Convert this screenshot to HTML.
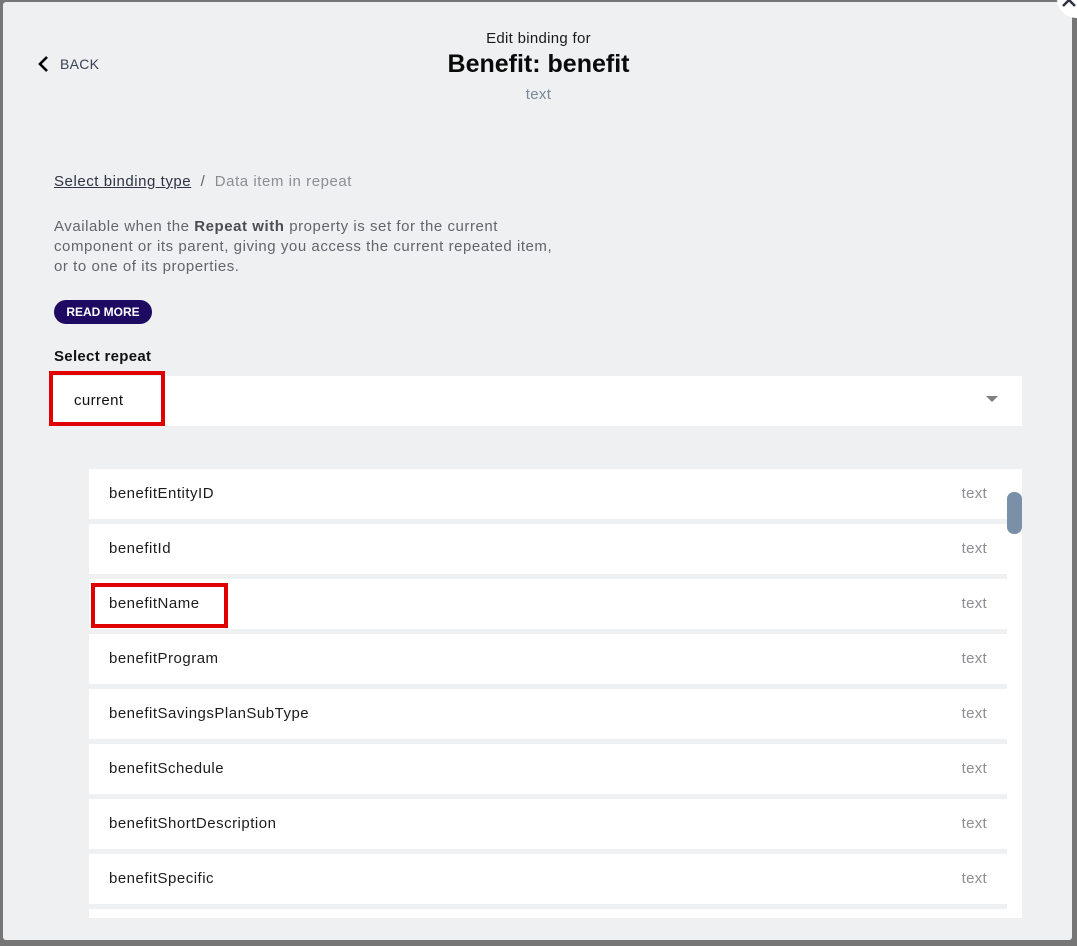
<!DOCTYPE html>
<html><head><meta charset="utf-8"><style>
*{box-sizing:border-box;margin:0;padding:0}
body{width:1077px;height:946px;background:#767676;position:relative;overflow:hidden;font-family:"Liberation Sans",sans-serif}
.modal{position:absolute;left:3px;top:2px;width:1069px;height:938px;background:#eff0f2;border-radius:3px}
.abs{position:absolute}
.back{left:34px;top:53px;font-size:14px;color:#3a4254;display:flex;align-items:center;letter-spacing:0.3px}
.list{position:absolute;left:86px;top:467px;width:933px;height:449px;background:#fff;overflow:hidden}
.row{position:absolute;left:0;width:918px;height:50px;background:#fff;border-bottom:5px solid #eff0f2;box-sizing:content-box}
.row .n{position:absolute;left:20px;top:16px;font-size:15px;color:#1c1c1c;letter-spacing:0.5px}
.row .t{position:absolute;right:20px;top:16px;font-size:15px;color:#8e8e92;letter-spacing:0.3px}
.red{position:absolute;border:4px solid #e00000}
</style></head><body>
<div class="modal">
 <div class="abs back"><svg width="14" height="18" viewBox="0 0 14 18"><path d="M10 2 L3 9 L10 16" fill="none" stroke="#000" stroke-width="2.6"/></svg><span style="margin-left:9px">BACK</span></div>
 <div class="abs" style="left:0;width:1071px;top:28px;text-align:center;font-size:15px;color:#1a1a1a;letter-spacing:0.3px">Edit binding for</div>
 <div class="abs" style="left:0;width:1071px;top:48px;text-align:center;font-size:25px;font-weight:bold;color:#0a0a0a">Benefit: benefit</div>
 <div class="abs" style="left:0;width:1071px;top:84px;text-align:center;font-size:15px;color:#7a8899;letter-spacing:0.3px">text</div>
 <div class="abs" style="left:51px;top:171px;font-size:15px;color:#5e6066;letter-spacing:0.55px"><span style="text-decoration:underline;color:#2e3445">Select binding type</span>&nbsp;&nbsp;/&nbsp;&nbsp;<span style="color:#8b8d92">Data item in repeat</span></div>
 <div class="abs" style="left:51px;top:215px;width:515px;font-size:15px;line-height:20px;color:#63656b;letter-spacing:0.55px">Available when the <b style="color:#4b4d52">Repeat with</b> property is set for the current component or its parent, giving you access the current repeated item, or to one of its properties.</div>
 <div class="abs" style="left:51px;top:298px;width:98px;height:24px;border-radius:12px;background:#1e0a63;color:#fff;font-size:12px;font-weight:bold;text-align:center;line-height:24px">READ MORE</div>
 <div class="abs" style="left:51px;top:346px;font-size:15px;font-weight:bold;color:#111;letter-spacing:0.3px">Select repeat</div>
 <div class="abs" style="left:47px;top:374px;width:972px;height:50px;background:#fff"></div>
 <div class="abs" style="left:71px;top:390px;font-size:15px;color:#111;letter-spacing:0.4px">current</div>
 <svg class="abs" style="left:983px;top:394px" width="12" height="7"><path d="M0 0 L12 0 L6 6 Z" fill="#7d7f85"/></svg>
 <div class="red" style="left:46px;top:369px;width:116px;height:55px"></div>
 <div class="list">
  <div class="row" style="top:0"><span class="n">benefitEntityID</span><span class="t">text</span></div>
  <div class="row" style="top:55px"><span class="n">benefitId</span><span class="t">text</span></div>
  <div class="row" style="top:110px"><span class="n">benefitName</span><span class="t">text</span></div>
  <div class="row" style="top:165px"><span class="n">benefitProgram</span><span class="t">text</span></div>
  <div class="row" style="top:220px"><span class="n">benefitSavingsPlanSubType</span><span class="t">text</span></div>
  <div class="row" style="top:275px"><span class="n">benefitSchedule</span><span class="t">text</span></div>
  <div class="row" style="top:330px"><span class="n">benefitShortDescription</span><span class="t">text</span></div>
  <div class="row" style="top:385px"><span class="n">benefitSpecific</span><span class="t">text</span></div>
  <div class="row" style="top:440px"></div>
  <div class="abs" style="left:918px;top:23px;width:15px;height:42px;border-radius:7px;background:#7a8fa8"></div>
 </div>
 <div class="red" style="left:88px;top:581px;width:137px;height:45px"></div>
</div>
<div class="abs" style="left:1057px;top:-20px;width:38px;height:38px;border-radius:50%;background:#fff"></div>
<svg class="abs" style="left:1060px;top:-10px" width="17" height="20"><path d="M3 16 L15 4 M3 4 L15 16" fill="none" stroke="#2e3445" stroke-width="2.5"/></svg>
</body></html>
